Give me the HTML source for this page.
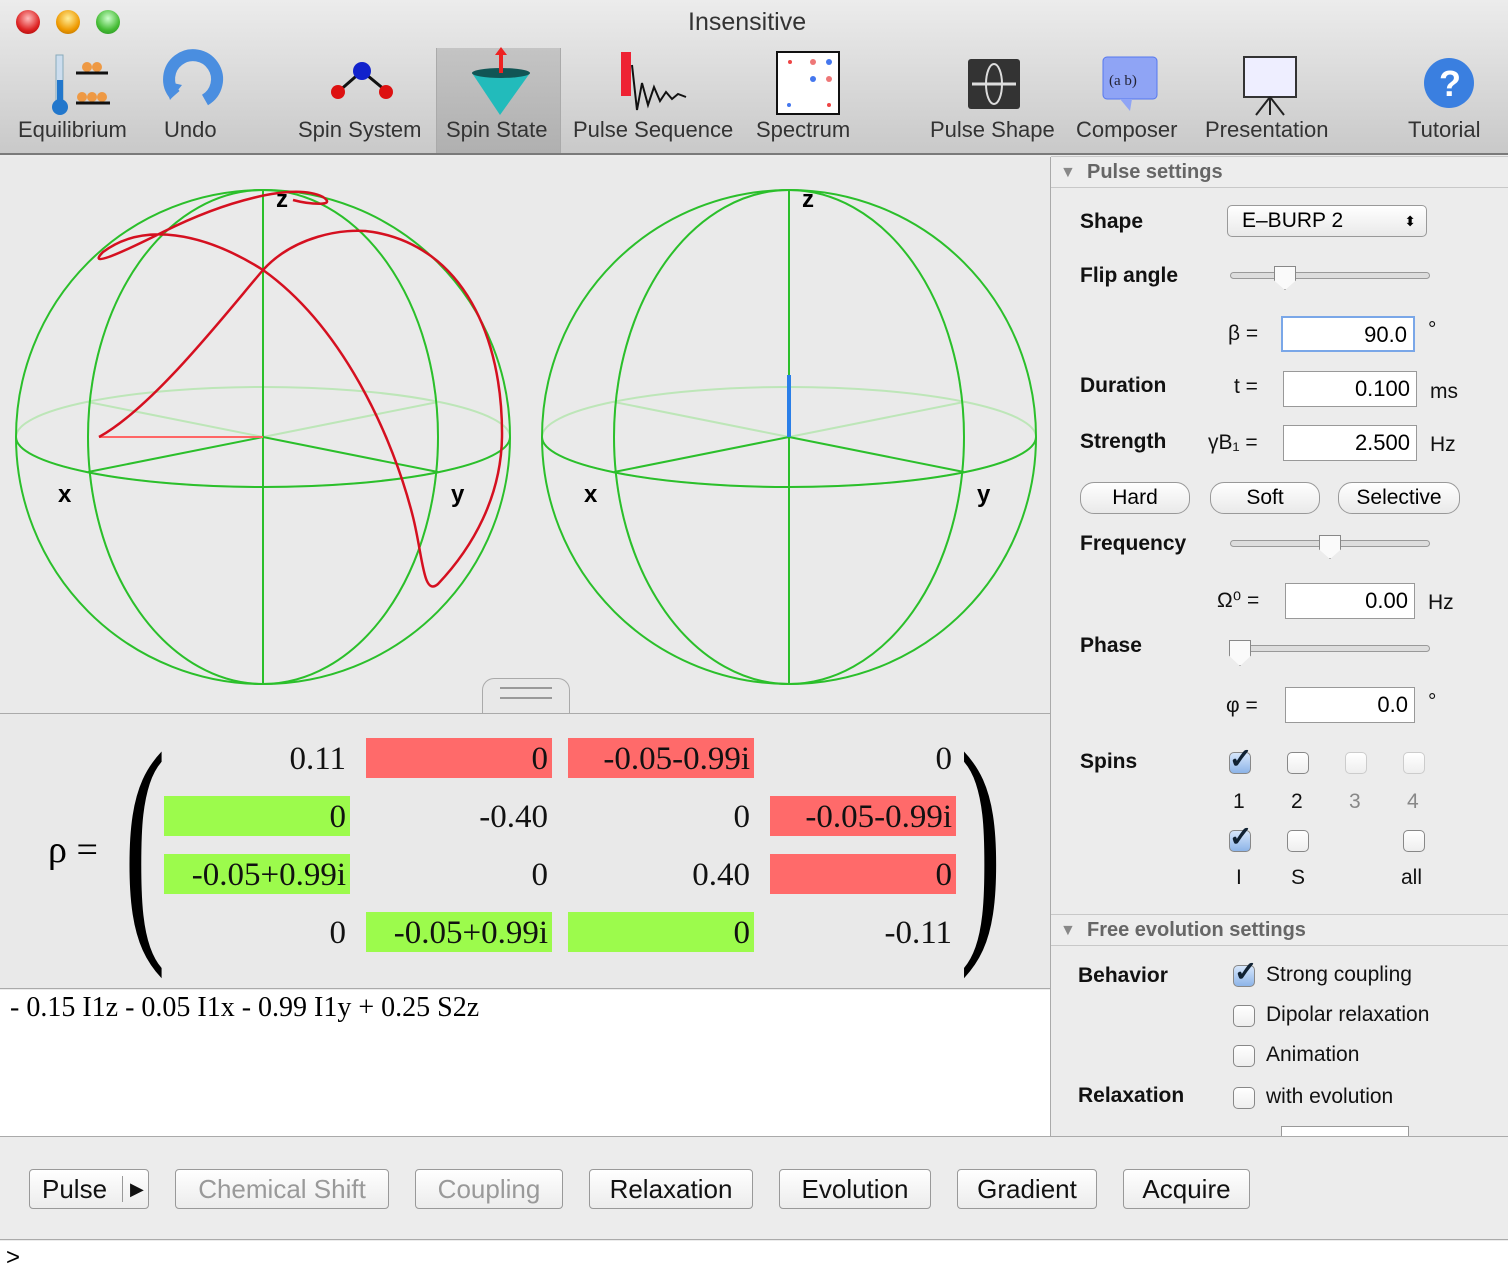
<!DOCTYPE html>
<html><head><meta charset="utf-8"><style>
*{margin:0;padding:0;box-sizing:border-box}
body{width:1508px;height:1274px;overflow:hidden;background:#ececec;font-family:"Liberation Sans",sans-serif;position:relative}
.a{position:absolute}
.tb{left:0;top:0;width:1508px;height:155px;background:linear-gradient(#ececec,#c9c9c9);border-bottom:2px solid #7a7a7a}
.tl{font-size:22px;color:#333;position:absolute;top:117px;white-space:nowrap}
.lb{font-weight:bold;font-size:21px;color:#111;position:absolute}
.tx{font-size:21px;color:#111;position:absolute}
.in{position:absolute;background:#fff;border:1px solid #999;font-size:22px;text-align:right;padding-right:6px;height:36px;line-height:34px}
.pb{position:absolute;border:1px solid #999;border-radius:14px;background:linear-gradient(#fff,#e9e9e9);font-size:21px;text-align:center;height:32px;line-height:30px}
.cb{position:absolute;width:22px;height:22px;border:1px solid #888;border-radius:5px;background:linear-gradient(#fff,#eee)}
.cb.on{background:linear-gradient(#d6e6fb,#8db4e8)}
.cb.dis{border-color:#ccc}
.ck{position:absolute;font-size:28px;color:#123;font-weight:bold;line-height:1}
.cell{position:absolute;width:186px;height:40px;font-family:"Liberation Serif",serif;font-size:33px;text-align:right;padding-right:4px;line-height:42px;color:#111}
.r{background:#ff6a6a}.g{background:#9cfb4c}
.bt{position:absolute;top:1169px;height:40px;border:1px solid #999;border-radius:4px;background:linear-gradient(#fff,#ececec);font-size:26px;line-height:38px;text-align:center;color:#111}
.sec{position:absolute;left:1051px;width:457px;height:32px;background:#ededed;border-top:1px solid #c8c8c8;border-bottom:1px solid #c8c8c8;font-weight:bold;font-size:20px;color:#666;padding-left:36px;line-height:30px}
.sl{position:absolute;height:7px;border:1px solid #999;border-radius:4px;background:#ddd}
</style></head><body>
<div class="a tb"></div>
<div class="a" style="left:16px;top:10px;width:24px;height:24px;border-radius:50%;background:radial-gradient(circle at 50% 35%,#fbb,#d22 60%,#900)"></div>
<div class="a" style="left:56px;top:10px;width:24px;height:24px;border-radius:50%;background:radial-gradient(circle at 50% 35%,#fe9,#e90 60%,#a60)"></div>
<div class="a" style="left:96px;top:10px;width:24px;height:24px;border-radius:50%;background:radial-gradient(circle at 50% 35%,#cfc,#4b3 60%,#282)"></div>
<div class="a" style="left:688px;top:8px;font-size:25px;color:#333">Insensitive</div>
<div class="a" style="left:436px;top:48px;width:125px;height:105px;background:linear-gradient(#c4c4c4,#b0b0b0);border-left:1px solid #aaa;border-right:1px solid #aaa"></div>
<svg class="a" style="left:0;top:45px" width="1508" height="75">
<rect x="56" y="10" width="7" height="55" fill="#cde" stroke="#8ab"/><circle cx="60" cy="62" r="8" fill="#27c"/><rect x="57" y="35" width="6" height="25" fill="#27c"/>
<circle cx="87" cy="22" r="5" fill="#e94"/><circle cx="97" cy="22" r="5" fill="#e94"/><line x1="76" y1="28" x2="108" y2="28" stroke="#111" stroke-width="3"/>
<circle cx="82" cy="52" r="5" fill="#e94"/><circle cx="92" cy="52" r="5" fill="#e94"/><circle cx="102" cy="52" r="5" fill="#e94"/><line x1="76" y1="58" x2="110" y2="58" stroke="#111" stroke-width="3"/>
<path d="M175 50 A24 24 0 1 1 205 55" fill="none" stroke="#4a8ee0" stroke-width="12"/><path d="M164 36 L182 40 L170 55Z" fill="#4a8ee0"/>
<line x1="362" y1="26" x2="338" y2="47" stroke="#111" stroke-width="3"/><line x1="362" y1="26" x2="385" y2="45" stroke="#111" stroke-width="3"/>
<circle cx="362" cy="26" r="9" fill="#12c"/><circle cx="338" cy="47" r="7" fill="#d11"/><circle cx="386" cy="47" r="7" fill="#d11"/>
<path d="M472 28 L530 28 L500 70Z" fill="#2bb"/><ellipse cx="501" cy="28" rx="29" ry="5" fill="#155"/><line x1="501" y1="28" x2="501" y2="6" stroke="#e22" stroke-width="4"/><path d="M495 10 L501 2 L507 10Z" fill="#e22"/>
<rect x="621" y="7" width="10" height="44" fill="#e23"/><path d="M632 20 L637 65 L642 38 L648 60 L654 42 L660 56 L666 47 L672 54 L678 49 L686 52" fill="none" stroke="#111" stroke-width="2"/>
<rect x="777" y="7" width="62" height="62" fill="#fff" stroke="#111" stroke-width="2"/><circle cx="790" cy="17" r="2" fill="#e44"/><circle cx="813" cy="17" r="3" fill="#e77"/><circle cx="829" cy="17" r="3" fill="#47e"/><circle cx="813" cy="34" r="3" fill="#47e"/><circle cx="829" cy="34" r="3" fill="#e77"/><circle cx="789" cy="60" r="2" fill="#47e"/><circle cx="829" cy="60" r="2" fill="#e44"/>
<rect x="968" y="14" width="52" height="50" rx="3" fill="#333"/><ellipse cx="994" cy="39" rx="8" ry="20" fill="none" stroke="#ddd" stroke-width="2"/><line x1="972" y1="39" x2="1016" y2="39" stroke="#ddd" stroke-width="3"/>
<rect x="1103" y="12" width="54" height="42" rx="4" fill="#8fa4f5" stroke="#57e"/><path d="M1120 54 L1130 66 L1132 54Z" fill="#8fa4f5"/><text x="1109" y="40" font-family="Liberation Serif" font-size="15" fill="#223">(a b)</text>
<rect x="1244" y="12" width="52" height="40" fill="#eef" stroke="#333" stroke-width="2"/><line x1="1270" y1="52" x2="1256" y2="70" stroke="#222" stroke-width="2"/><line x1="1270" y1="52" x2="1284" y2="70" stroke="#222" stroke-width="2"/><line x1="1270" y1="52" x2="1270" y2="70" stroke="#222" stroke-width="2"/>
<circle cx="1449" cy="38" r="25" fill="#3a7fe0"/><text x="1439" y="51" font-size="36" font-weight="bold" fill="#fff">?</text>
</svg>
<div class="tl" style="left:18px">Equilibrium</div><div class="tl" style="left:164px">Undo</div><div class="tl" style="left:298px">Spin System</div><div class="tl" style="left:446px">Spin State</div><div class="tl" style="left:573px">Pulse Sequence</div><div class="tl" style="left:756px">Spectrum</div><div class="tl" style="left:930px">Pulse Shape</div><div class="tl" style="left:1076px">Composer</div><div class="tl" style="left:1205px">Presentation</div><div class="tl" style="left:1408px">Tutorial</div>

<!-- spheres -->
<div class="a" style="left:0;top:157px;width:1051px;height:556px;background:#eaeaea"></div>
<svg class="a" style="left:0;top:157px" width="1051" height="556">
<g fill="none" stroke-width="2">
<g transform="translate(263,280)">
<ellipse rx="175" ry="247" stroke="#bde6b8"/><ellipse rx="247" ry="50" stroke="#bde6b8"/>
<line x1="0" y1="0" x2="-175" y2="-35" stroke="#bde6b8"/><line x1="0" y1="0" x2="175" y2="-35" stroke="#bde6b8"/>
<circle r="247" stroke="#2bbf2b"/><ellipse rx="175" ry="247" stroke="#2bbf2b"/>
<line x1="0" y1="-247" x2="0" y2="247" stroke="#2bbf2b"/><line x1="0" y1="0" x2="-175" y2="35" stroke="#2bbf2b"/><line x1="0" y1="0" x2="175" y2="35" stroke="#2bbf2b"/>
<path d="M-247 0 A247 50 0 0 0 247 0" stroke="#2bbf2b"/>
<line x1="-164" y1="0" x2="0" y2="0" stroke="#f66"/>
<path d="M-164 0 C-110 -30 -40 -120 0 -167 C30 -200 80 -210 110 -205 C200 -190 240 -100 239 0 C238 60 210 110 175 147 C160 160 160 120 150 80 C130 0 80 -110 0 -167 C-60 -205 -120 -215 -160 -185 C-175 -170 -150 -180 -100 -205 C-40 -235 30 -255 60 -240 C75 -230 45 -233 30 -237" stroke="#d51020" stroke-width="2.5"/>
</g>
<g transform="translate(789,280)">
<ellipse rx="175" ry="247" stroke="#bde6b8"/><ellipse rx="247" ry="50" stroke="#bde6b8"/>
<line x1="0" y1="0" x2="-175" y2="-35" stroke="#bde6b8"/><line x1="0" y1="0" x2="175" y2="-35" stroke="#bde6b8"/>
<circle r="247" stroke="#2bbf2b"/><ellipse rx="175" ry="247" stroke="#2bbf2b"/>
<path d="M-247 0 A247 50 0 0 0 247 0" stroke="#2bbf2b"/>
<line x1="0" y1="-247" x2="0" y2="247" stroke="#2bbf2b"/><line x1="0" y1="0" x2="-175" y2="35" stroke="#2bbf2b"/><line x1="0" y1="0" x2="175" y2="35" stroke="#2bbf2b"/>
<line x1="0" y1="0" x2="0" y2="-62" stroke="#2a7fe8" stroke-width="4"/>
</g></g>
<g font-weight="bold" font-size="24" font-family="Liberation Sans">
<text x="276" y="50">z</text><text x="58" y="345">x</text><text x="451" y="345">y</text>
<text x="802" y="50">z</text><text x="584" y="345">x</text><text x="977" y="345">y</text></g>
</svg>
<div class="a" style="left:482px;top:678px;width:88px;height:36px;border:1px solid #aaa;border-bottom:none;border-radius:12px 12px 0 0;background:#e8e8e8"></div>
<div class="a" style="left:500px;top:687px;width:52px;height:12px;border-top:2px solid #999;border-bottom:2px solid #999"></div>

<!-- matrix -->
<div class="a" style="left:0;top:713px;width:1051px;height:276px;background:#e9e9e9;border-top:1px solid #aaa;border-bottom:1px solid #aaa"></div>
<div class="a" style="left:48px;top:828px;font-size:38px;font-family:'Liberation Serif',serif">ρ =</div>
<div class="a" style="left:124px;top:722px;font-size:250px;font-family:'Liberation Serif',serif;line-height:240px;transform:scaleX(0.5);transform-origin:left">(</div>
<div class="a" style="left:960px;top:722px;font-size:250px;font-family:'Liberation Serif',serif;line-height:240px;transform:scaleX(0.5);transform-origin:left">)</div>
<div class="cell" style="left:164px;top:738px">0.11</div><div class="cell r" style="left:366px;top:738px">0</div><div class="cell r" style="left:568px;top:738px">-0.05-0.99i</div><div class="cell" style="left:770px;top:738px">0</div>
<div class="cell g" style="left:164px;top:796px">0</div><div class="cell" style="left:366px;top:796px">-0.40</div><div class="cell" style="left:568px;top:796px">0</div><div class="cell r" style="left:770px;top:796px">-0.05-0.99i</div>
<div class="cell g" style="left:164px;top:854px">-0.05+0.99i</div><div class="cell" style="left:366px;top:854px">0</div><div class="cell" style="left:568px;top:854px">0.40</div><div class="cell r" style="left:770px;top:854px">0</div>
<div class="cell" style="left:164px;top:912px">0</div><div class="cell g" style="left:366px;top:912px">-0.05+0.99i</div><div class="cell g" style="left:568px;top:912px">0</div><div class="cell" style="left:770px;top:912px">-0.11</div>
<div class="a" style="left:0;top:990px;width:1051px;height:146px;background:#fff"></div>
<div class="a" style="left:10px;top:992px;font-family:'Liberation Serif',serif;font-size:28px">- 0.15 I1z - 0.05 I1x - 0.99 I1y + 0.25 S2z</div>

<!-- right panel -->
<div class="a" style="left:1050px;top:157px;width:1px;height:980px;background:#aaa"></div>
<div class="sec" style="top:156px">Pulse settings</div>
<div class="a" style="left:1060px;top:164px;font-size:16px;color:#888">▼</div>
<div class="lb" style="left:1080px;top:210px">Shape</div>
<div class="pb" style="left:1227px;top:205px;width:200px;border-radius:5px;text-align:left;padding-left:14px">E–BURP 2<span style="position:absolute;right:10px;font-size:14px">⬍</span></div>
<div class="lb" style="left:1080px;top:264px">Flip angle</div>
<div class="sl" style="left:1230px;top:272px;width:200px"></div>
<div class="a" style="left:1274px;top:266px;width:22px;height:24px;background:#fafafa;border:1px solid #888;clip-path:polygon(0 0,100% 0,100% 60%,50% 100%,0 60%)"></div>
<div class="tx" style="left:1228px;top:322px">β =</div>
<div class="in" style="left:1281px;top:316px;width:134px;border:2px solid #7aa7e8">90.0</div><div class="tx" style="left:1428px;top:318px">°</div>
<div class="lb" style="left:1080px;top:374px">Duration</div><div class="tx" style="left:1234px;top:375px">t =</div>
<div class="in" style="left:1283px;top:371px;width:134px">0.100</div><div class="tx" style="left:1430px;top:380px">ms</div>
<div class="lb" style="left:1080px;top:430px">Strength</div><div class="tx" style="left:1208px;top:431px">γB₁ =</div>
<div class="in" style="left:1283px;top:425px;width:134px">2.500</div><div class="tx" style="left:1430px;top:433px">Hz</div>
<div class="pb" style="left:1080px;top:482px;width:110px">Hard</div><div class="pb" style="left:1210px;top:482px;width:110px">Soft</div><div class="pb" style="left:1338px;top:482px;width:122px">Selective</div>
<div class="lb" style="left:1080px;top:532px">Frequency</div>
<div class="sl" style="left:1230px;top:540px;width:200px"></div>
<div class="a" style="left:1319px;top:535px;width:22px;height:24px;background:#fafafa;border:1px solid #888;clip-path:polygon(0 0,100% 0,100% 60%,50% 100%,0 60%)"></div>
<div class="tx" style="left:1217px;top:588px">Ω⁰ =</div>
<div class="in" style="left:1285px;top:583px;width:130px">0.00</div><div class="tx" style="left:1428px;top:591px">Hz</div>
<div class="lb" style="left:1080px;top:634px">Phase</div>
<div class="sl" style="left:1230px;top:645px;width:200px"></div>
<div class="a" style="left:1229px;top:640px;width:22px;height:26px;background:#fafafa;border:1px solid #888;clip-path:polygon(0 0,100% 0,100% 60%,50% 100%,0 60%)"></div>
<div class="tx" style="left:1226px;top:694px">φ =</div>
<div class="in" style="left:1285px;top:687px;width:130px">0.0</div><div class="tx" style="left:1428px;top:690px">°</div>
<div class="lb" style="left:1080px;top:750px">Spins</div>
<div class="cb on" style="left:1229px;top:752px"></div><div class="ck" style="left:1229px;top:745px">✓</div>
<div class="cb" style="left:1287px;top:752px"></div><div class="cb dis" style="left:1345px;top:752px"></div><div class="cb dis" style="left:1403px;top:752px"></div>
<div class="tx" style="left:1233px;top:790px">1</div><div class="tx" style="left:1291px;top:790px">2</div><div class="tx" style="left:1349px;top:790px;color:#888">3</div><div class="tx" style="left:1407px;top:790px;color:#888">4</div>
<div class="cb on" style="left:1229px;top:830px"></div><div class="ck" style="left:1229px;top:823px">✓</div>
<div class="cb" style="left:1287px;top:830px"></div><div class="cb" style="left:1403px;top:830px"></div>
<div class="tx" style="left:1236px;top:866px">I</div><div class="tx" style="left:1291px;top:866px">S</div><div class="tx" style="left:1401px;top:866px">all</div>
<div class="sec" style="top:914px">Free evolution settings</div>
<div class="a" style="left:1060px;top:922px;font-size:16px;color:#888">▼</div>
<div class="lb" style="left:1078px;top:964px">Behavior</div>
<div class="cb on" style="left:1233px;top:965px"></div><div class="ck" style="left:1234px;top:958px">✓</div><div class="tx" style="left:1266px;top:963px">Strong coupling</div>
<div class="cb" style="left:1233px;top:1005px"></div><div class="tx" style="left:1266px;top:1003px">Dipolar relaxation</div>
<div class="cb" style="left:1233px;top:1045px"></div><div class="tx" style="left:1266px;top:1043px">Animation</div>
<div class="lb" style="left:1078px;top:1084px">Relaxation</div>
<div class="cb" style="left:1233px;top:1087px"></div><div class="tx" style="left:1266px;top:1085px">with evolution</div>
<div class="a" style="left:1281px;top:1126px;width:128px;height:12px;border:1px solid #999;border-bottom:none;background:#fff"></div>

<!-- bottom -->
<div class="a" style="left:0;top:1136px;width:1508px;height:104px;background:#ececec;border-top:1px solid #aaa;border-bottom:1px solid #aaa"></div>
<div class="bt" style="left:29px;width:120px;text-align:left;padding-left:12px">Pulse<span style="position:absolute;left:92px;top:6px;height:26px;border-left:1px solid #999"></span><span style="position:absolute;left:100px;font-size:18px">▶</span></div>
<div class="bt" style="left:175px;width:214px;color:#999">Chemical Shift</div>
<div class="bt" style="left:415px;width:148px;color:#999">Coupling</div>
<div class="bt" style="left:589px;width:164px">Relaxation</div>
<div class="bt" style="left:779px;width:152px">Evolution</div>
<div class="bt" style="left:957px;width:140px">Gradient</div>
<div class="bt" style="left:1123px;width:127px">Acquire</div>
<div class="a" style="left:0;top:1241px;width:1508px;height:33px;background:#fff"></div>
<div class="a" style="left:6px;top:1244px;font-size:24px">&gt;</div>
</body></html>
